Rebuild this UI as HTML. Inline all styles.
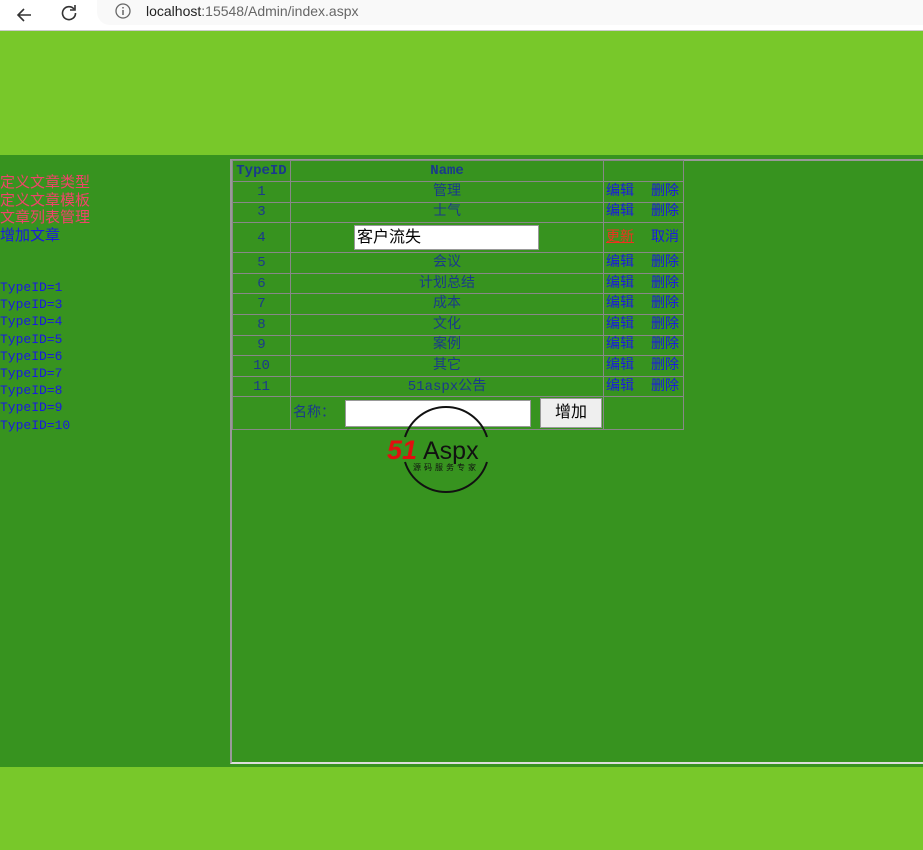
<!DOCTYPE html>
<html><head><meta charset="utf-8"><style>
body{margin:0;width:923px;height:850px;overflow:hidden;background:#78c82a;position:relative;font-family:"Liberation Mono","WenQuanYi Zen Hei",monospace;}
.bar{position:absolute;left:0;top:0;width:923px;height:30px;background:#fff;border-bottom:1px solid #ccc;}
.url{position:absolute;left:97px;top:0;width:826px;height:25px;background:#f9f9f9;border-radius:0 0 0 13px;}
.main{position:absolute;left:0;top:155px;width:923px;height:612px;background:#37931f;}
.left{position:absolute;left:0;top:175px;font-size:15px;line-height:17.5px;}
.r{color:#f0446a}.b{color:#1a1ae0}
.ids{position:absolute;left:0;top:279px;font-size:13px;line-height:17.2px;color:#1a1ae0;}
.panel{position:absolute;left:230px;top:159px;width:700px;height:601px;border:2px solid #999;border-right:none;border-bottom:2px solid #ddd;}
table{position:absolute;left:232px;top:160px;border-collapse:collapse;font-size:14px;color:#1a3a8c;table-layout:fixed;width:451px;}
td{border:1px solid #888;padding:0;height:19.6px;line-height:18px;text-align:center;overflow:hidden;}
th{border:1px solid #888;height:20px;font-size:14px;padding:0;}
a{color:#1a1ae0;text-decoration:none;}
.act{text-align:left;padding-left:2px;white-space:nowrap}
.act a+a{margin-left:17px}
</style></head><body>
<div class="bar">
<svg style="position:absolute;left:15px;top:6px" width="18" height="18"><path d="M16 9H3M9 3L3 9l6 6" stroke="#333" stroke-width="1.6" fill="none"/></svg>
<svg style="position:absolute;left:60px;top:3px" width="18" height="18"><path d="M14 6A6.5 6.5 0 1 0 15.5 10" stroke="#333" stroke-width="1.6" fill="none"/><path d="M15 2v5h-5" stroke="#333" stroke-width="1.6" fill="none"/></svg>
<div class="url"><svg style="position:absolute;left:18px;top:3px" width="16" height="16"><circle cx="8" cy="8" r="7" stroke="#666" stroke-width="1.3" fill="none"/><path d="M8 7v5M8 4v1.5" stroke="#666" stroke-width="1.5"/></svg>
<span style="position:absolute;left:49px;top:3px;font-family:'Liberation Sans',sans-serif;font-size:14px;color:#222">localhost<span style="color:#666">:15548/Admin/index.aspx</span></span></div>
</div>
<div class="main"></div>
<div class="left"><div class="r">定义文章类型</div><div class="r">定义文章模板</div><div class="r">文章列表管理</div><div class="b">增加文章</div></div>
<div class="ids">TypeID=1<br>TypeID=3<br>TypeID=4<br>TypeID=5<br>TypeID=6<br>TypeID=7<br>TypeID=8<br>TypeID=9<br>TypeID=10</div>
<div class="panel"></div>
<table>
<colgroup><col style="width:58px"><col style="width:313px"><col style="width:80px"></colgroup>
<tr><th>TypeID</th><th>Name</th><th></th></tr>
<tr><td>1</td><td>管理</td><td class="act"><a>编辑</a><a>删除</a></td></tr>
<tr><td>3</td><td>士气</td><td class="act"><a>编辑</a><a>删除</a></td></tr>
<tr><td style="height:29px">4</td><td><div style="margin-left:63px;width:185px;height:25px;background:#fff;border:1px solid #999;text-align:left;color:#000;font-size:16px;line-height:23px;padding-left:2px;box-sizing:border-box;font-family:'Liberation Sans','WenQuanYi Zen Hei',sans-serif">客户流失</div></td><td class="act"><a style="color:#f03020;text-decoration:underline">更新</a><a style="color:#1a1ae0">取消</a></td></tr>
<tr><td>5</td><td>会议</td><td class="act"><a>编辑</a><a>删除</a></td></tr>
<tr><td>6</td><td>计划总结</td><td class="act"><a>编辑</a><a>删除</a></td></tr>
<tr><td>7</td><td>成本</td><td class="act"><a>编辑</a><a>删除</a></td></tr>
<tr><td>8</td><td>文化</td><td class="act"><a>编辑</a><a>删除</a></td></tr>
<tr><td>9</td><td>案例</td><td class="act"><a>编辑</a><a>删除</a></td></tr>
<tr><td>10</td><td>其它</td><td class="act"><a>编辑</a><a>删除</a></td></tr>
<tr><td>11</td><td>51aspx公告</td><td class="act"><a>编辑</a><a>删除</a></td></tr>
<tr><td style="height:32px"></td><td style="text-align:left;white-space:nowrap;padding-left:2px">名称：<span style="display:inline-block;vertical-align:middle;width:184px;height:25px;background:#fff;margin-left:10px;border:1px solid #999"></span><span style="display:inline-block;vertical-align:middle;width:60px;height:28px;background:#efefef;border:1px solid #999;margin-left:9px;text-align:center;line-height:28px;color:#000;font-size:16px;font-family:'Liberation Sans','WenQuanYi Zen Hei',sans-serif">增加</span></td><td></td></tr>
</table>
<svg style="position:absolute;left:385px;top:402px" width="130" height="92">
<path d="M20 35A43 43 0 0 1 102 35" stroke="#111" stroke-width="2" fill="none"/>
<path d="M20 60A43 43 0 0 0 102 60" stroke="#111" stroke-width="2" fill="none"/>
<text x="2" y="57" font-family="Liberation Sans,sans-serif" font-size="27" font-weight="bold" font-style="italic" fill="#e01010">51</text>
<text x="38" y="57" font-family="Liberation Sans,sans-serif" font-size="25" fill="#111">Aspx</text>
<text x="28" y="68" font-family="WenQuanYi Zen Hei,sans-serif" font-size="8" fill="#111" letter-spacing="3">源码服务专家</text>
</svg>
</body></html>
